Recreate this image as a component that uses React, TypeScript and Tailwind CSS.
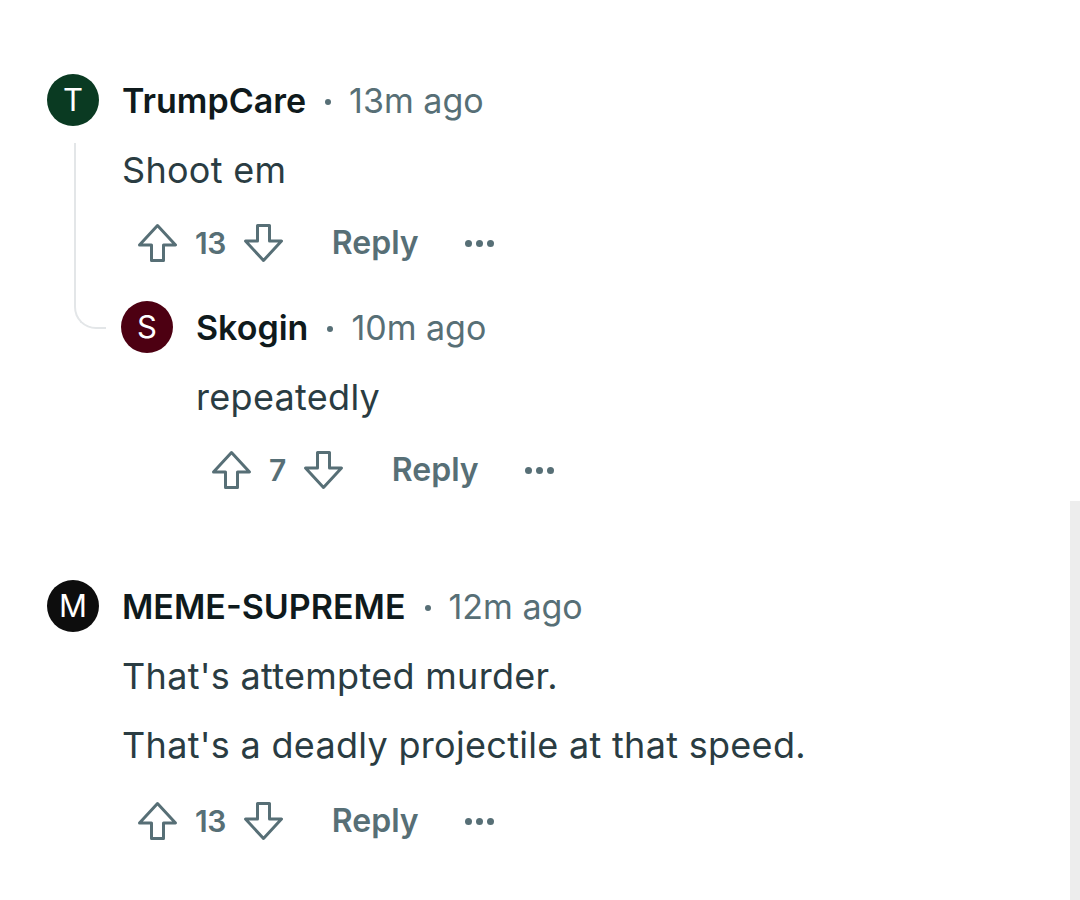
import type { ReactNode } from 'react'

interface CommentData {
  initial: string
  avatarBg: string
  name: string
  time: string
  body: string[]
  score: number
}

const font = { fontFamily: 'Inter, "Noto Sans", sans-serif' }

function UpArrow() {
  return (
    <svg width="41" height="40" viewBox="0 0 41 40" fill="none" className="shrink-0">
      <path
        d="M20.5 2.5 L38.5 22 H26.5 V37.5 H14.5 V22 H2.5 Z"
        stroke="currentColor"
        strokeWidth="3"
        strokeLinejoin="round"
      />
    </svg>
  )
}

function DownArrow() {
  return (
    <svg width="41" height="40" viewBox="0 0 41 40" fill="none" className="shrink-0">
      <path
        d="M20.5 37.5 L38.5 18 H26.5 V2.5 H14.5 V18 H2.5 Z"
        stroke="currentColor"
        strokeWidth="3"
        strokeLinejoin="round"
      />
    </svg>
  )
}

function Dots() {
  return (
    <div className="flex items-center gap-[4px]">
      <span className="w-[7px] h-[7px] rounded-full bg-[#576f76]" />
      <span className="w-[7px] h-[7px] rounded-full bg-[#576f76]" />
      <span className="w-[7px] h-[7px] rounded-full bg-[#576f76]" />
    </div>
  )
}

function Comment({ c, children, topGap }: { c: CommentData; children?: ReactNode; topGap: string }) {
  const multi = c.body.length > 1
  return (
    <div className={`relative ${topGap}`}>
      {/* header */}
      <div className="flex items-center h-[52px]">
        <div
          className="w-[52px] h-[52px] rounded-full flex items-center justify-center text-white text-[31px] shrink-0"
          style={{ backgroundColor: c.avatarBg }}
        >
          {c.initial}
        </div>
        <span className="ml-[23px] text-[34px] font-semibold text-[#0f1a1c]">{c.name}</span>
        <span className="ml-[19px] mr-[18px] w-[6px] h-[6px] rounded-full bg-[#576f76] mt-[4px]" />
        <span className="text-[34px] text-[#576f76]">{c.time}</span>
      </div>

      <div className="pl-[75px]">
        <div className="mt-[22px] flex flex-col gap-[25px]">
          {c.body.map((line, i) => (
            <p key={i} className="text-[36px] leading-[44px] tracking-[0.3px] text-[#2a3c42]">{line}</p>
          ))}
        </div>

        <div className={`${multi ? 'mt-[30px]' : 'mt-[27px]'} h-[48px] flex items-center text-[#576f76] pl-[15px]`}>
          <UpArrow />
          <span className="ml-[17px] text-[30px] font-semibold tracking-[-0.5px]">{c.score}</span>
          <span className="ml-[17px]"><DownArrow /></span>
          <span className="ml-[48px] text-[32px] font-semibold">Reply</span>
          <span className="ml-[46px]"><Dots /></span>
        </div>
      </div>

      {children}
    </div>
  )
}

const trump: CommentData = {
  initial: 'T',
  avatarBg: '#0a3a22',
  name: 'TrumpCare',
  time: '13m ago',
  body: ['Shoot em'],
  score: 13,
}

const skogin: CommentData = {
  initial: 'S',
  avatarBg: '#4d0012',
  name: 'Skogin',
  time: '10m ago',
  body: ['repeatedly'],
  score: 7,
}

const meme: CommentData = {
  initial: 'M',
  avatarBg: '#0d0d0d',
  name: 'MEME-SUPREME',
  time: '12m ago',
  body: ["That's attempted murder.", "That's a deadly projectile at that speed."],
  score: 13,
}

export default function App() {
  return (
    <div className="relative w-[1080px] h-[900px] bg-white overflow-hidden" style={font}>
      <div className="pl-[47px] pt-[74px]">
        <Comment c={trump} topGap="">
          {/* thread connector */}
          <div className="absolute left-[27px] top-[69px] w-[32px] h-[186px] border-l-2 border-b-2 border-[#e3e6e8] rounded-bl-[22px]" />
          <div className="pl-[74px]">
            <Comment c={skogin} topGap="mt-[34px]" />
          </div>
        </Comment>
        <Comment c={meme} topGap="mt-[86px]" />
      </div>
      {/* scrollbar track */}
      <div className="absolute right-0 top-[501px] bottom-0 w-[10px] bg-[#ededed]" />
    </div>
  )
}
